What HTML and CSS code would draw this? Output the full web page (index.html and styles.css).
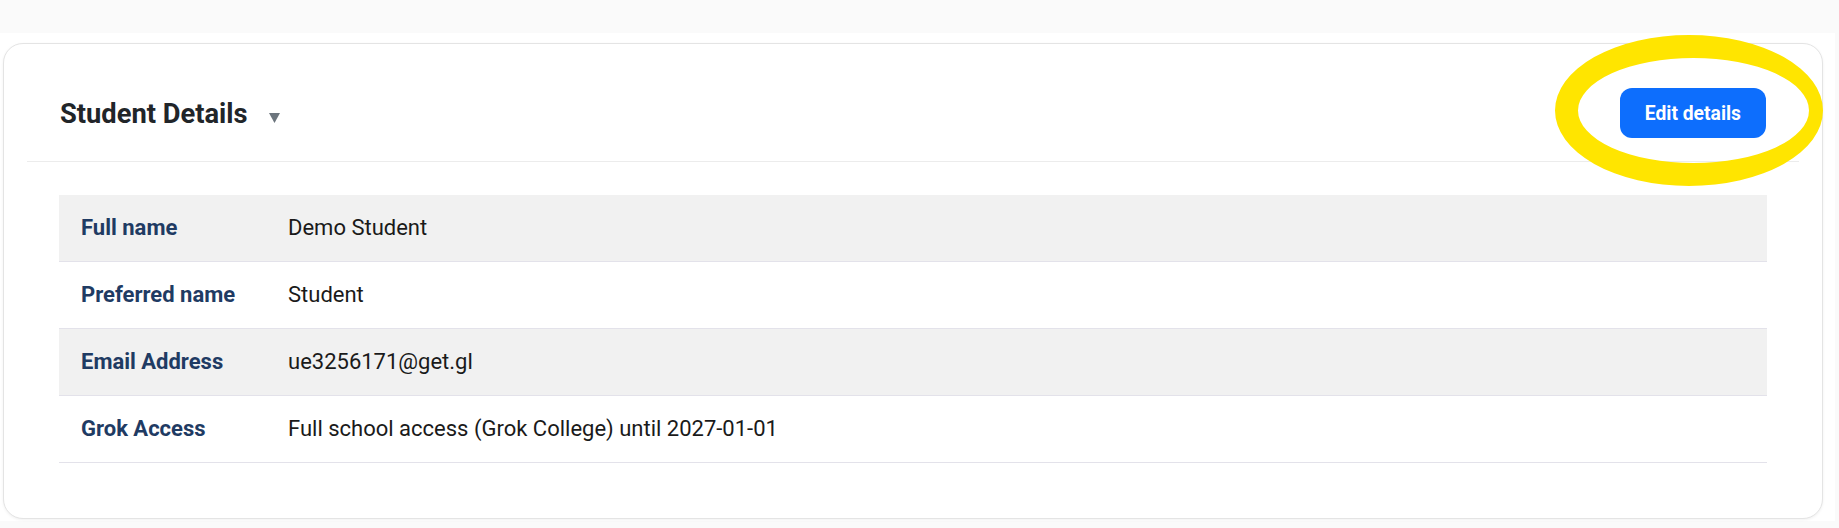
FILE: index.html
```html
<!DOCTYPE html>
<html lang="en">
<head>
<meta charset="utf-8">
<title>Student Details</title>
<link rel="stylesheet" href="styles.css">
</head>
<body>
<div class="top-band"></div>
<main class="main">
  <section class="card">
    <header class="card-header">
      <div class="title-wrap">
        <h2 class="title">Student Details</h2>
        <svg class="caret" width="11" height="10" viewBox="0 0 11 10"><polygon points="0,0 11,0 5.5,10" fill="#6c757d"/></svg>
      </div>
      <button class="btn">Edit details</button>
    </header>
    <div class="details">
      <div class="row"><div class="label">Full name</div><div class="value">Demo Student</div></div>
      <div class="row"><div class="label">Preferred name</div><div class="value">Student</div></div>
      <div class="row"><div class="label">Email Address</div><div class="value">ue3256171@get.gl</div></div>
      <div class="row"><div class="label">Grok Access</div><div class="value">Full school access (Grok College) until 2027-01-01</div></div>
    </div>
  </section>
  <svg class="highlight" width="280" height="160" viewBox="0 0 280 160">
    <path fill="#ffe500" fill-rule="evenodd" d="M0,75.5 A134,75.5 0 1,0 268,75.5 A134,75.5 0 1,0 0,75.5 Z M23,75.5 A115.5,52.5 0 1,0 254,75.5 A115.5,52.5 0 1,0 23,75.5 Z"/>
  </svg>
</main>
</body>
</html>
```

FILE: styles.css
```css
* { box-sizing: border-box; }

html, body {
  margin: 0;
  padding: 0;
}

body {
  background: #fafafa;
  font-family: Roboto, "Liberation Sans", Arial, sans-serif;
  color: #212529;
  width: 1839px;
  height: 528px;
  overflow: hidden;
}

.top-band {
  height: 33px;
}

.main {
  position: relative;
  width: 1835px;
  background: #ffffff;
  padding: 10px 12px 2px 3px;
}

.card {
  background: #ffffff;
  border: 1px solid #e4e4e4;
  border-radius: 20px;
  box-shadow: 0 1px 3px rgba(0, 0, 0, 0.06);
  padding-bottom: 55px;
}

.card-header {
  display: flex;
  align-items: center;
  justify-content: space-between;
  margin: 0 23px;
  padding: 44px 33px 23px;
  border-bottom: 1px solid #ececec;
}

.title-wrap {
  display: flex;
  align-items: center;
  gap: 21px;
}

.title {
  margin: 0;
  font-size: 27.3px;
  font-weight: 700;
  color: #212529;
  line-height: 34px;
  padding-top: 2px;
}

.caret {
  display: block;
  margin-top: 10px;
}

.btn {
  height: 50px;
  padding: 0 25px;
  border: none;
  border-radius: 12px;
  background: #0d6efd;
  color: #ffffff;
  font-family: Roboto, "Liberation Sans", Arial, sans-serif;
  font-size: 19.3px;
  font-weight: 700;
  cursor: pointer;
}

.details {
  margin: 33px 55px 0;
}

.row {
  display: grid;
  grid-template-columns: 207px 1fr;
  border-bottom: 1px solid #e3e2ea;
}

.row:nth-child(odd) {
  background: #f1f1f1;
}

.label,
.value {
  padding: 16px 22px;
  font-size: 22px;
  line-height: 34px;
}

.label {
  font-weight: 700;
  color: #1f3b63;
}

.value {
  color: #1a1a1a;
}

.highlight {
  position: absolute;
  left: 1555px;
  top: 2px;
  pointer-events: none;
}
```
